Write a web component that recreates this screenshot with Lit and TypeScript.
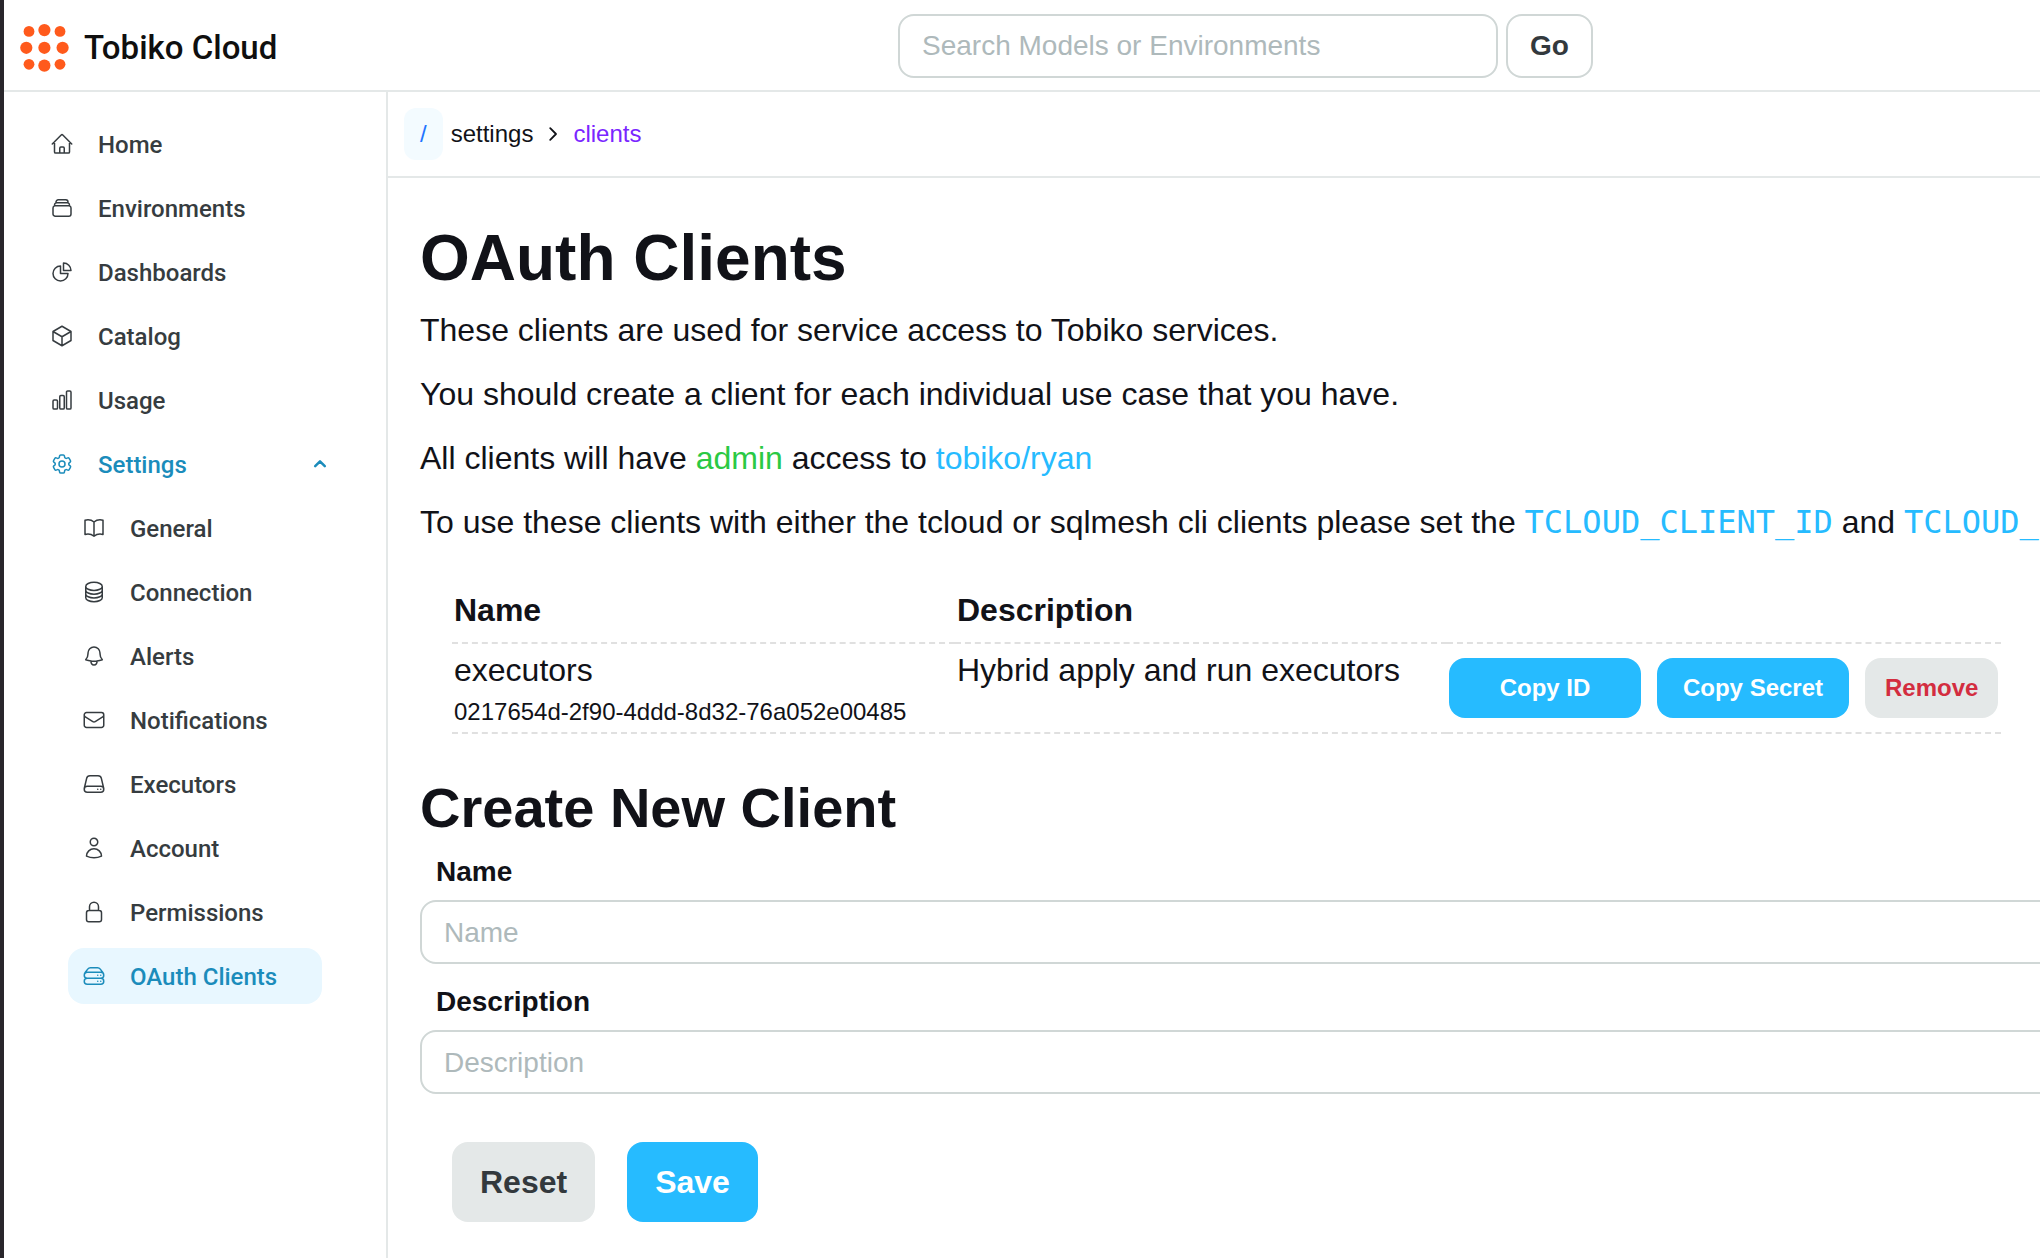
import { LitElement, html, svg, css } from "lit";
import { customElement } from "lit/decorators.js";
import { classMap } from "lit/directives/class-map.js";

const ICONS: Record<string, string[]> = {
  home: [
    "m2.25 12 8.954-8.955c.44-.439 1.152-.439 1.591 0L21.75 12M4.5 9.75v10.125c0 .621.504 1.125 1.125 1.125H9.75v-4.875c0-.621.504-1.125 1.125-1.125h2.25c.621 0 1.125.504 1.125 1.125V21h4.125c.621 0 1.125-.504 1.125-1.125V9.75M8.25 21h8.25",
  ],
  stack: [
    "M6 6.878V6a2.25 2.25 0 0 1 2.25-2.25h7.5A2.25 2.25 0 0 1 18 6v.878m-12 0c.235-.083.487-.128.75-.128h10.5c.263 0 .515.045.75.128m-12 0A2.25 2.25 0 0 0 4.5 9v.878m13.5-3A2.25 2.25 0 0 1 19.5 9v.878m0 0a2.246 2.246 0 0 0-.75-.128H5.25c-.263 0-.515.045-.75.128m15 0A2.25 2.25 0 0 1 21 12v6a2.25 2.25 0 0 1-2.25 2.25H5.25A2.25 2.25 0 0 1 3 18v-6c0-.98.626-1.813 1.5-2.122",
  ],
  pie: [
    "M10.5 6a7.5 7.5 0 1 0 7.5 7.5h-7.5V6Z",
    "M13.5 10.5H21A7.5 7.5 0 0 0 13.5 3v7.5Z",
  ],
  cube: [
    "m21 7.5-9-5.25L3 7.5m18 0-9 5.25m9-5.25v9l-9 5.25M3 7.5l9 5.25M3 7.5v9l9 5.25m0-9v9",
  ],
  bars: [
    "M3 13.125C3 12.504 3.504 12 4.125 12h2.25c.621 0 1.125.504 1.125 1.125v6.75C7.5 20.496 6.996 21 6.375 21h-2.25A1.125 1.125 0 0 1 3 19.875v-6.75ZM9.75 8.625c0-.621.504-1.125 1.125-1.125h2.25c.621 0 1.125.504 1.125 1.125v11.25c0 .621-.504 1.125-1.125 1.125h-2.25a1.125 1.125 0 0 1-1.125-1.125V8.625ZM16.5 4.125c0-.621.504-1.125 1.125-1.125h2.25C20.496 3 21 3.504 21 4.125v15.75c0 .621-.504 1.125-1.125 1.125h-2.25a1.125 1.125 0 0 1-1.125-1.125V4.125Z",
  ],
  cog: [
    "M9.594 3.94c.09-.542.56-.94 1.11-.94h2.593c.55 0 1.02.398 1.11.94l.213 1.281c.063.374.313.686.645.87.074.04.147.083.22.127.325.196.72.257 1.075.124l1.217-.456a1.125 1.125 0 0 1 1.37.49l1.296 2.247a1.125 1.125 0 0 1-.26 1.431l-1.003.827c-.293.241-.438.613-.43.992a7.723 7.723 0 0 1 0 .255c-.008.378.137.75.43.991l1.004.827c.424.35.534.955.26 1.43l-1.298 2.247a1.125 1.125 0 0 1-1.369.491l-1.217-.456c-.355-.133-.75-.072-1.076.124a6.47 6.47 0 0 1-.22.128c-.331.183-.581.495-.644.869l-.213 1.281c-.09.543-.56.94-1.11.94h-2.594c-.55 0-1.019-.398-1.11-.94l-.213-1.281c-.062-.374-.312-.686-.644-.87a6.52 6.52 0 0 1-.22-.127c-.325-.196-.72-.257-1.076-.124l-1.217.456a1.125 1.125 0 0 1-1.369-.49l-1.297-2.247a1.125 1.125 0 0 1 .26-1.431l1.004-.827c.292-.24.437-.613.43-.991a6.932 6.932 0 0 1 0-.255c.007-.38-.138-.751-.43-.992l-1.004-.827a1.125 1.125 0 0 1-.26-1.43l1.297-2.247a1.125 1.125 0 0 1 1.37-.491l1.216.456c.356.133.751.072 1.076-.124.072-.044.146-.086.22-.128.332-.183.582-.495.644-.869l.214-1.28Z",
    "M15 12a3 3 0 1 1-6 0 3 3 0 0 1 6 0Z",
  ],
  book: [
    "M12 6.042A8.967 8.967 0 0 0 6 3.75c-1.052 0-2.062.18-3 .512v14.25A8.987 8.987 0 0 1 6 18c2.305 0 4.408.867 6 2.292m0-14.25a8.966 8.966 0 0 1 6-2.292c1.052 0 2.062.18 3 .512v14.25A8.987 8.987 0 0 0 18 18a8.967 8.967 0 0 0-6 2.292m0-14.25v14.25",
  ],
  database: [
    "M20.25 6.375c0 2.278-3.694 4.125-8.25 4.125S3.75 8.653 3.75 6.375m16.5 0c0-2.278-3.694-4.125-8.25-4.125S3.75 4.097 3.75 6.375m16.5 0v11.25c0 2.278-3.694 4.125-8.25 4.125s-8.25-1.847-8.25-4.125V6.375m16.5 0v3.75m-16.5-3.75v3.75m16.5 0v3.75C20.25 16.153 16.556 18 12 18s-8.25-1.847-8.25-4.125v-3.75m16.5 0c0 2.278-3.694 4.125-8.25 4.125s-8.25-1.847-8.25-4.125",
  ],
  bell: [
    "M14.857 17.082a23.848 23.848 0 0 0 5.454-1.31A8.967 8.967 0 0 1 18 9.75V9A6 6 0 0 0 6 9v.75a8.967 8.967 0 0 1-2.312 6.022c1.733.64 3.56 1.085 5.455 1.31m5.714 0a24.255 24.255 0 0 1-5.714 0m5.714 0a3 3 0 1 1-5.714 0",
  ],
  envelope: [
    "M21.75 6.75v10.5a2.25 2.25 0 0 1-2.25 2.25h-15a2.25 2.25 0 0 1-2.25-2.25V6.75m19.5 0A2.25 2.25 0 0 0 19.5 4.5h-15a2.25 2.25 0 0 0-2.25 2.25m19.5 0v.243a2.25 2.25 0 0 1-1.07 1.916l-7.5 4.615a2.25 2.25 0 0 1-2.36 0L3.32 8.91a2.25 2.25 0 0 1-1.07-1.916V6.75",
  ],
  server: [
    "M21.75 17.25v-.228a4.5 4.5 0 0 0-.12-1.03l-2.268-9.64a3.375 3.375 0 0 0-3.285-2.602H7.923a3.375 3.375 0 0 0-3.285 2.602l-2.268 9.64a4.5 4.5 0 0 0-.12 1.03v.228m19.5 0a3 3 0 0 1-3 3H5.25a3 3 0 0 1-3-3m19.5 0a3 3 0 0 0-3-3H5.25a3 3 0 0 0-3 3m16.5 0h.008v.008h-.008v-.008Zm-3 0h.008v.008h-.008v-.008Z",
  ],
  user: [
    "M15.75 6a3.75 3.75 0 1 1-7.5 0 3.75 3.75 0 0 1 7.5 0ZM4.501 20.118a7.5 7.5 0 0 1 14.998 0A17.933 17.933 0 0 1 12 21.75c-2.676 0-5.216-.584-7.499-1.632Z",
  ],
  lock: [
    "M16.5 10.5V6.75a4.5 4.5 0 1 0-9 0v3.75m-.75 11.25h10.5a2.25 2.25 0 0 0 2.25-2.25v-6.75a2.25 2.25 0 0 0-2.25-2.25H6.75a2.25 2.25 0 0 0-2.25 2.25v6.75a2.25 2.25 0 0 0 2.25 2.25Z",
  ],
  servers: [
    "M5.25 14.25h13.5m-13.5 0a3 3 0 0 1-3-3m3 3a3 3 0 1 0 0 6h13.5a3 3 0 1 0 0-6m-16.5-3a3 3 0 0 1 3-3h13.5a3 3 0 0 1 3 3m-19.5 0a4.5 4.5 0 0 1 .9-2.7L5.737 5.1a3.375 3.375 0 0 1 2.7-1.35h7.126c1.062 0 2.062.5 2.7 1.35l2.587 3.45a4.5 4.5 0 0 1 .9 2.7m0 0a3 3 0 0 1-3 3m0 3h.008v.008h-.008v-.008Zm0-6h.008v.008h-.008v-.008Zm-3 6h.008v.008h-.008v-.008Zm0-6h.008v.008h-.008v-.008Z",
  ],
};

interface NavEntry {
  label: string;
  icon: string;
  active?: boolean;
}

const MAIN_NAV: NavEntry[] = [
  { label: "Home", icon: "home" },
  { label: "Environments", icon: "stack" },
  { label: "Dashboards", icon: "pie" },
  { label: "Catalog", icon: "cube" },
  { label: "Usage", icon: "bars" },
];

const SETTINGS_NAV: NavEntry[] = [
  { label: "General", icon: "book" },
  { label: "Connection", icon: "database" },
  { label: "Alerts", icon: "bell" },
  { label: "Notifications", icon: "envelope" },
  { label: "Executors", icon: "server" },
  { label: "Account", icon: "user" },
  { label: "Permissions", icon: "lock" },
  { label: "OAuth Clients", icon: "servers", active: true },
];

interface Client {
  name: string;
  id: string;
  description: string;
}

const CLIENTS: Client[] = [
  {
    name: "executors",
    id: "0217654d-2f90-4ddd-8d32-76a052e00485",
    description: "Hybrid apply and run executors",
  },
];

const icon = (name: string) => html`
  <svg class="icon" viewBox="0 0 24 24" aria-hidden="true">
    ${ICONS[name].map((d) => svg`<path d=${d}></path>`)}
  </svg>
`;

@customElement("tc-header")
class TcHeader extends LitElement {
  static styles = css`
    :host {
      display: block;
      border-bottom: 2px solid #e4e8e8;
    }
    .bar {
      display: flex;
      align-items: center;
      box-sizing: border-box;
      height: 90px;
      padding: 2px 0 0 16px;
    }
    .brand {
      display: flex;
      align-items: center;
      gap: 15px;
      flex: 0 1 878px;
      padding-top: 4px;
      color: #0f0f0f;
      font: 500 33px/48px Roboto, sans-serif;
      text-decoration: none;
      white-space: nowrap;
    }
    .logo {
      width: 49px;
      height: 48px;
      fill: #ff5a1c;
    }
    .search {
      display: flex;
      gap: 8px;
    }
    .query,
    .go {
      box-sizing: border-box;
      height: 64px;
      border: 2px solid #d0d7d6;
      border-radius: 16px;
      background: #fff;
      padding: 0 22px;
      font: 28px/42px "Liberation Sans", sans-serif;
    }
    .query {
      width: 600px;
      color: #111218;
    }
    .query::placeholder {
      color: #aeb9bb;
      opacity: 1;
    }
    .go {
      color: #33393d;
      font-weight: 700;
    }
  `;

  render() {
    return html`
      <header class="bar">
        <a class="brand" href="#">
          <svg class="logo" viewBox="0 0 49 48" aria-hidden="true">
            <circle cx="9" cy="7.4" r="5.4"></circle>
            <circle cx="24.4" cy="6.1" r="6.1"></circle>
            <circle cx="40" cy="7.4" r="5.4"></circle>
            <circle cx="6.3" cy="23.8" r="6.1"></circle>
            <circle cx="24.4" cy="23.8" r="6.1"></circle>
            <circle cx="42.6" cy="23.8" r="6.1"></circle>
            <circle cx="9" cy="40.3" r="5.4"></circle>
            <circle cx="24.4" cy="41.6" r="6.1"></circle>
            <circle cx="40" cy="40.3" r="5.4"></circle>
          </svg>
          <span>Tobiko Cloud</span>
        </a>
        <form class="search" role="search">
          <input
            class="query"
            type="search"
            aria-label="Search Models or Environments"
            placeholder="Search Models or Environments"
          />
          <button class="go" type="button">Go</button>
        </form>
      </header>
    `;
  }
}

@customElement("tc-sidebar")
class TcSidebar extends LitElement {
  static styles = css`
    :host {
      display: block;
      box-sizing: border-box;
      flex: 0 0 384px;
      border-right: 2px solid #e4e8e8;
    }
    .nav {
      padding: 24px 40px 24px 32px;
    }
    .list,
    .sublist {
      display: flex;
      flex-direction: column;
      gap: 8px;
      margin: 0;
      padding: 0;
      list-style: none;
    }
    .sublist {
      margin-top: 8px;
      padding: 0 24px 0 32px;
    }
    .item {
      display: flex;
      align-items: center;
      gap: 24px;
      height: 56px;
      padding: 0 14px;
      border-radius: 16px;
      color: #363c40;
      font: 500 24px/36px Roboto, sans-serif;
      text-decoration: none;
    }
    .open,
    .active {
      color: #1b8cbb;
    }
    .active {
      background: #e8f7ff;
    }
    .label {
      flex: 1;
      padding-top: 2px;
      white-space: nowrap;
    }
    .icon,
    .chevron {
      flex: none;
      width: 24px;
      height: 24px;
      fill: none;
      stroke: currentColor;
      stroke-width: 1.5;
      stroke-linecap: round;
      stroke-linejoin: round;
    }
    .chevron {
      stroke-width: 2.5;
    }
  `;

  private entry(e: NavEntry) {
    return html`
      <li>
        <a class=${classMap({ item: true, active: !!e.active })} href="#">
          ${icon(e.icon)}<span class="label">${e.label}</span>
        </a>
      </li>
    `;
  }

  render() {
    return html`
      <nav class="nav" aria-label="Main">
        <ul class="list">
          ${MAIN_NAV.map((e) => this.entry(e))}
          <li>
            <a class="item open" href="#" aria-expanded="true">
              ${icon("cog")}<span class="label">Settings</span>
              <svg class="chevron" viewBox="0 0 24 24" aria-hidden="true">
                <path d="M7.2 14.2 12 9.4l4.8 4.8"></path>
              </svg>
            </a>
            <ul class="sublist">
              ${SETTINGS_NAV.map((e) => this.entry(e))}
            </ul>
          </li>
        </ul>
      </nav>
    `;
  }
}

@customElement("tc-breadcrumbs")
class TcBreadcrumbs extends LitElement {
  static styles = css`
    :host {
      display: block;
      border-bottom: 2px solid #e4e8e8;
    }
    .trail {
      display: flex;
      align-items: center;
      gap: 8px;
      padding: 16px;
      font: 24px/36px "Liberation Sans", sans-serif;
      color: #111218;
    }
    .root {
      padding: 8px 16px;
      border-radius: 12px;
      background: #f3fbff;
      color: #1f75ff;
      text-decoration: none;
    }
    .crumb {
      color: inherit;
      text-decoration: none;
    }
    .current {
      color: #7a26ff;
    }
    .sep {
      width: 24px;
      height: 24px;
      fill: none;
      stroke: currentColor;
      stroke-width: 1.8;
      stroke-linecap: round;
      stroke-linejoin: round;
    }
  `;

  render() {
    return html`
      <nav class="trail" aria-label="Breadcrumb">
        <a class="root" href="#">/</a>
        <a class="crumb" href="#">settings</a>
        <svg class="sep" viewBox="0 0 24 24" aria-hidden="true">
          <path d="m9.2 6.2 5.8 5.8-5.8 5.8"></path>
        </svg>
        <a class="crumb current" href="#" aria-current="page">clients</a>
      </nav>
    `;
  }
}

@customElement("tc-clients")
class TcClients extends LitElement {
  static styles = css`
    :host {
      display: block;
      padding: 48px 0 32px 32px;
      overflow: hidden;
      color: #111218;
      font: 32px/48px "Liberation Sans", sans-serif;
    }
    .title {
      margin: 0 0 16px;
      font-size: 64px;
      line-height: 64px;
    }
    .text {
      margin: 0 0 16px;
      white-space: nowrap;
    }
    .role {
      color: #2ac944;
    }
    .project {
      color: #26bbff;
    }
    .variable {
      color: #26bbff;
      font: 32px/32px "DejaVu Sans Mono", monospace;
    }
    .tablewrap {
      margin: 32px 39px 0 32px;
    }
    .clients {
      width: 100%;
      border-spacing: 0;
      table-layout: fixed;
    }
    .col-name {
      width: 503px;
    }
    .col-actions {
      width: 554px;
    }
    .head {
      padding: 8px 2px;
      border-bottom: 2px dashed #e0e0e0;
      text-align: left;
      font-weight: 700;
    }
    .cell {
      padding: 2px;
      border-bottom: 2px dashed #e0e0e0;
      vertical-align: top;
    }
    .uid {
      font-size: 24px;
      line-height: 36px;
    }
    .actions {
      display: flex;
      gap: 16px;
      padding: 12px 0;
    }
    .btn {
      height: 60px;
      padding: 0 20px;
      border: 0;
      border-radius: 16px;
      background: #e4e8e8;
      color: #33393d;
      font: 700 24px/36px "Liberation Sans", sans-serif;
    }
    .copy {
      width: 192px;
    }
    .primary {
      background: #26bbff;
      color: #fff;
    }
    .danger {
      color: #d32d3f;
    }
    .large {
      height: 80px;
      padding: 0 28px;
      font-size: 32px;
      line-height: 48px;
    }
    .subtitle {
      margin: 46px 0 14px;
      font-size: 56px;
      line-height: 56px;
    }
    .form {
      display: flex;
      flex-direction: column;
      gap: 16px;
      margin-right: -32px;
    }
    .field {
      display: flex;
      flex-direction: column;
      gap: 6px;
    }
    .label {
      padding-left: 16px;
      font-size: 28px;
      font-weight: 700;
      line-height: 44px;
    }
    .input {
      box-sizing: border-box;
      height: 64px;
      padding: 2px 22px 0;
      border: 2px solid #d0d7d6;
      border-radius: 16px;
      background: #fff;
      color: inherit;
      font: 28px/42px "Liberation Sans", sans-serif;
    }
    .input::placeholder {
      color: #aeb9bb;
      opacity: 1;
    }
    .buttons {
      display: flex;
      gap: 32px;
      padding: 32px 32px 0;
    }
  `;

  render() {
    return html`
      <h1 class="title">OAuth Clients</h1>
      <p class="text">These clients are used for service access to Tobiko services.</p>
      <p class="text">You should create a client for each individual use case that you have.</p>
      <p class="text">
        All clients will have <span class="role">admin</span> access to
        <span class="project">tobiko/ryan</span>
      </p>
      <p class="text">
        To use these clients with either the tcloud or sqlmesh cli clients please set the
        <code class="variable">TCLOUD_CLIENT_ID</code> and
        <code class="variable">TCLOUD_</code>
      </p>
      <div class="tablewrap">
        <table class="clients">
          <colgroup>
            <col class="col-name" />
            <col />
            <col class="col-actions" />
          </colgroup>
          <thead>
            <tr>
              <th class="head" scope="col">Name</th>
              <th class="head" scope="col">Description</th>
              <td class="head"></td>
            </tr>
          </thead>
          <tbody>
            ${CLIENTS.map(
              (c) => html`
                <tr>
                  <td class="cell">
                    <div>${c.name}</div>
                    <div class="uid">${c.id}</div>
                  </td>
                  <td class="cell">${c.description}</td>
                  <td class="cell">
                    <div class="actions">
                      <button class="btn primary copy" type="button">Copy ID</button>
                      <button class="btn primary copy" type="button">Copy Secret</button>
                      <button class="btn danger" type="button">Remove</button>
                    </div>
                  </td>
                </tr>
              `
            )}
          </tbody>
        </table>
      </div>
      <h2 class="subtitle">Create New Client</h2>
      <form class="form">
        <div class="field">
          <label class="label" for="client-name">Name</label>
          <input class="input" id="client-name" type="text" placeholder="Name" />
        </div>
        <div class="field">
          <label class="label" for="client-description">Description</label>
          <input class="input" id="client-description" type="text" placeholder="Description" />
        </div>
        <div class="buttons">
          <button class="btn large" type="reset">Reset</button>
          <button class="btn large primary" type="button">Save</button>
        </div>
      </form>
    `;
  }
}

@customElement("app-root")
class AppRoot extends LitElement {
  static styles = css`
    :host {
      display: flex;
      flex-direction: column;
      box-sizing: border-box;
      min-height: 100vh;
      border-left: 4px solid #29262b;
      background: #fff;
    }
    .body {
      display: flex;
      flex: 1;
    }
    .main {
      flex: 1;
      min-width: 0;
    }
  `;

  render() {
    return html`
      <tc-header></tc-header>
      <div class="body">
        <tc-sidebar></tc-sidebar>
        <main class="main">
          <tc-breadcrumbs></tc-breadcrumbs>
          <tc-clients></tc-clients>
        </main>
      </div>
    `;
  }
}
